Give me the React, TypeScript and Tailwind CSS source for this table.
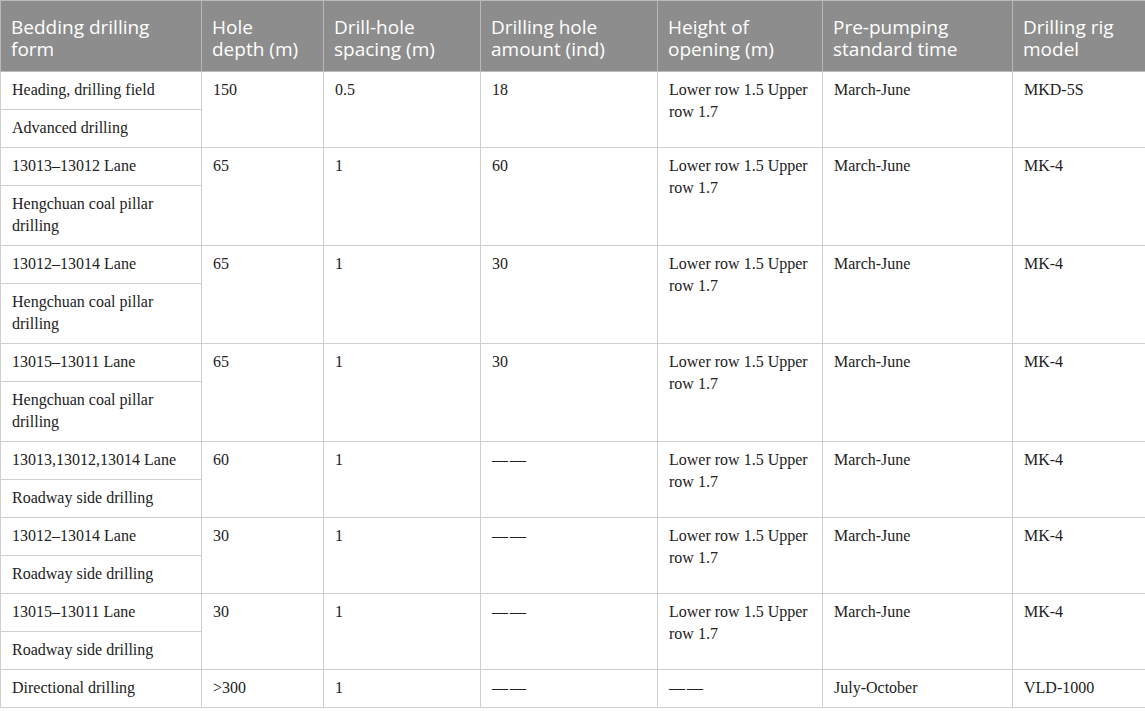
const rows = [
  {
    form: ["Heading, drilling field", "Advanced drilling"],
    depth: "150",
    spacing: "0.5",
    amount: "18",
    height: "Lower row 1.5 Upper row 1.7",
    time: "March-June",
    rig: "MKD-5S",
  },
  {
    form: ["13013–13012 Lane", "Hengchuan coal pillar drilling"],
    depth: "65",
    spacing: "1",
    amount: "60",
    height: "Lower row 1.5 Upper row 1.7",
    time: "March-June",
    rig: "MK-4",
  },
  {
    form: ["13012–13014 Lane", "Hengchuan coal pillar drilling"],
    depth: "65",
    spacing: "1",
    amount: "30",
    height: "Lower row 1.5 Upper row 1.7",
    time: "March-June",
    rig: "MK-4",
  },
  {
    form: ["13015–13011 Lane", "Hengchuan coal pillar drilling"],
    depth: "65",
    spacing: "1",
    amount: "30",
    height: "Lower row 1.5 Upper row 1.7",
    time: "March-June",
    rig: "MK-4",
  },
  {
    form: ["13013,13012,13014 Lane", "Roadway side drilling"],
    depth: "60",
    spacing: "1",
    amount: "——",
    height: "Lower row 1.5 Upper row 1.7",
    time: "March-June",
    rig: "MK-4",
  },
  {
    form: ["13012–13014 Lane", "Roadway side drilling"],
    depth: "30",
    spacing: "1",
    amount: "——",
    height: "Lower row 1.5 Upper row 1.7",
    time: "March-June",
    rig: "MK-4",
  },
  {
    form: ["13015–13011 Lane", "Roadway side drilling"],
    depth: "30",
    spacing: "1",
    amount: "——",
    height: "Lower row 1.5 Upper row 1.7",
    time: "March-June",
    rig: "MK-4",
  },
  {
    form: ["Directional drilling"],
    depth: ">300",
    spacing: "1",
    amount: "——",
    height: "——",
    time: "July-October",
    rig: "VLD-1000",
  },
];

const headers = [
  "Bedding drilling form",
  "Hole depth (m)",
  "Drill-hole spacing (m)",
  "Drilling hole amount (ind)",
  "Height of opening (m)",
  "Pre-pumping standard time",
  "Drilling rig model",
];

const th =
  "border border-[#b9b9b9] bg-[#8d8d8d] pl-[10px] pr-[20px] pt-[15px] pb-[11px] text-left align-top font-normal text-white text-[19px] leading-[22px]";
const td =
  "border border-[#cfcfcf] pl-[11px] pr-[8px] pt-[7px] pb-[8px] align-top";

const Dash = () => <span className="tracking-[2px]">——</span>;

const App = () => {
  return (
    <div className="w-[1145px] bg-white">
      <table
        className="w-[1145px] table-fixed border-collapse text-[16px] leading-[22px] text-[#222]"
        style={{ fontFamily: '"Liberation Serif", "Times New Roman", serif' }}
      >
        <colgroup>
          <col className="w-[201px]" />
          <col className="w-[122px]" />
          <col className="w-[157px]" />
          <col className="w-[177px]" />
          <col className="w-[165px]" />
          <col className="w-[190px]" />
          <col className="w-[133px]" />
        </colgroup>
        <thead>
          <tr style={{ fontFamily: '"Open Sans", "Noto Sans", sans-serif' }}>
            {headers.map((h) => (
              <th key={h} className={th}>
                {h}
              </th>
            ))}
          </tr>
        </thead>
        <tbody>
          {rows.map((r, i) => {
            const span = r.form.length;
            const cell = (v: string) => (v === "——" ? <Dash /> : v);
            return [
              <tr key={`${i}-a`}>
                <td className={td}>{r.form[0]}</td>
                <td className={td} rowSpan={span}>{r.depth}</td>
                <td className={td} rowSpan={span}>{r.spacing}</td>
                <td className={td} rowSpan={span}>{cell(r.amount)}</td>
                <td className={td} rowSpan={span}>{cell(r.height)}</td>
                <td className={td} rowSpan={span}>{r.time}</td>
                <td className={td} rowSpan={span}>{r.rig}</td>
              </tr>,
              span > 1 ? (
                <tr key={`${i}-b`}>
                  <td className={td}>{r.form[1]}</td>
                </tr>
              ) : null,
            ];
          })}
        </tbody>
      </table>
    </div>
  );
};

export default App;
